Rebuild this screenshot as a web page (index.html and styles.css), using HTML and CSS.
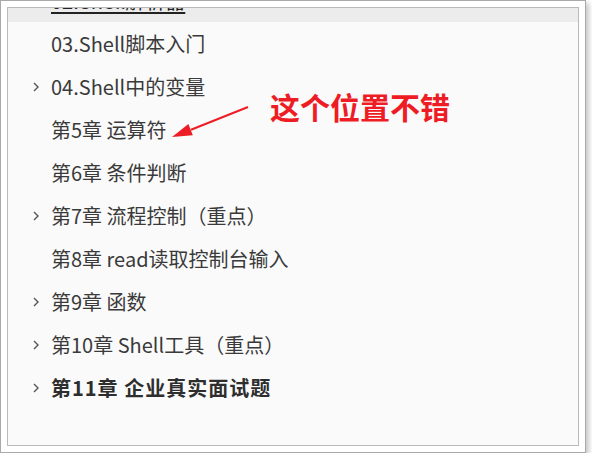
FILE: index.html
```html
<!DOCTYPE html>
<html lang="zh-CN">
<head>
<meta charset="utf-8">
<title>Shell 目录</title>
<link rel="stylesheet" href="styles.css">
</head>
<body>
<div class="frame">
  <div class="panel">
    <ul class="toc">
      <li class="item active"><span class="chev-space"></span><span class="label">02.Shell解析器</span></li>
      <li class="item"><span class="chev-space"></span><span class="label">03.Shell脚本入门</span></li>
      <li class="item"><svg class="chev" viewBox="0 0 6 10"><polyline points="1,1 5,5 1,9"/></svg><span class="label">04.Shell中的变量</span></li>
      <li class="item"><span class="chev-space"></span><span class="label">第5章 运算符</span></li>
      <li class="item"><span class="chev-space"></span><span class="label">第6章 条件判断</span></li>
      <li class="item"><svg class="chev" viewBox="0 0 6 10"><polyline points="1,1 5,5 1,9"/></svg><span class="label">第7章 流程控制（重点）</span></li>
      <li class="item"><span class="chev-space"></span><span class="label">第8章 read读取控制台输入</span></li>
      <li class="item"><svg class="chev" viewBox="0 0 6 10"><polyline points="1,1 5,5 1,9"/></svg><span class="label">第9章 函数</span></li>
      <li class="item"><svg class="chev" viewBox="0 0 6 10"><polyline points="1,1 5,5 1,9"/></svg><span class="label">第10章 Shell工具（重点）</span></li>
      <li class="item strong"><svg class="chev" viewBox="0 0 6 10"><polyline points="1,1 5,5 1,9"/></svg><span class="label">第11章 企业真实面试题</span></li>
    </ul>
    <div class="note">这个位置不错</div>
    <svg class="arrow" viewBox="0 0 570 437" width="570" height="437">
      <line x1="240" y1="99" x2="183" y2="121.7"/>
      <polygon points="164,129 184.8,127.3 180.4,116.1"/>
    </svg>
  </div>
</div>
</body>
</html>
```

FILE: styles.css
```css
html, body {
  margin: 0;
  padding: 0;
  background: #ffffff;
}

body {
  font-family: "Noto Sans CJK SC", sans-serif;
}

.frame {
  box-sizing: border-box;
  width: 586px;
  height: 453px;
  border: 1px solid #a9a9a9;
  padding: 6px;
  background: #ffffff;
  box-shadow: 3px 3px 5px rgba(0, 0, 0, 0.22);
}

.panel {
  position: relative;
  box-sizing: border-box;
  height: 100%;
  border: 1px solid #bababa;
  background: #fafafa;
  overflow: hidden;
}

.toc {
  list-style: none;
  margin: -29px 0 0 0;
  padding: 0;
}

.item {
  display: flex;
  align-items: center;
  height: 43px;
  padding-left: 25px;
  font-size: 20px;
  color: #3a3a3a;
  white-space: nowrap;
}

.item.active {
  background: #ececec;
}

.item.active .label {
  color: #222;
  text-decoration: underline;
  text-decoration-thickness: 2px;
  text-underline-offset: 3px;
}

.item.strong {
  font-weight: bold;
  color: #2e2e2e;
  letter-spacing: 1px;
}

.chev,
.chev-space {
  flex: none;
  width: 6px;
  height: 10px;
  margin-right: 12px;
}

.chev polyline {
  fill: none;
  stroke: #555;
  stroke-width: 1.4;
}

.note {
  position: absolute;
  left: 262px;
  top: 81px;
  font-size: 30px;
  line-height: 34px;
  font-weight: bold;
  color: #ee1d25;
  white-space: nowrap;
}

.arrow {
  position: absolute;
  left: 0;
  top: 0;
}

.arrow line {
  stroke: #ee1d25;
  stroke-width: 2;
}

.arrow polygon {
  fill: #ee1d25;
}
```
